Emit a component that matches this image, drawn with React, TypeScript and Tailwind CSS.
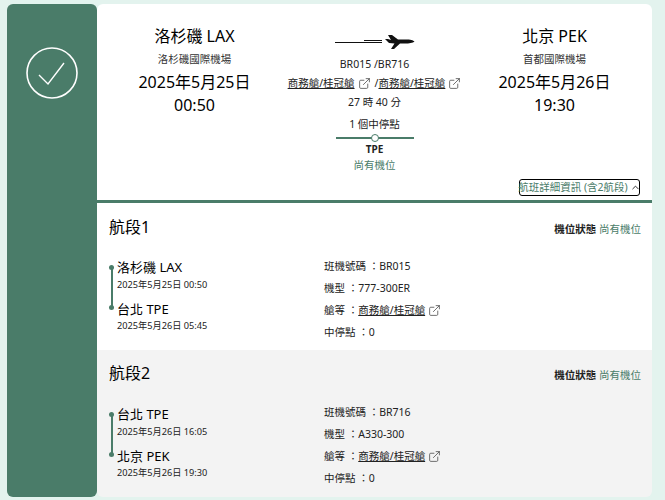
import { ChevronUp, ExternalLink } from 'lucide-react';

const LinkIcon = () => <ExternalLink className="w-[13px] h-[13px] ml-[3px] text-[#444] shrink-0" strokeWidth={1.4} />;

const segments = [
    {
        title: '航段1',
        bg: 'bg-white',
        headPad: 'pt-[12px]',
        routePad: 'mt-0',
        from: '洛杉磯 LAX',
        fromTime: '2025年5月25日 00:50',
        to: '台北 TPE',
        toTime: '2025年5月26日 05:45',
        flight: 'BR015',
        model: '777-300ER'
    },
    {
        title: '航段2',
        bg: 'bg-[#f3f3f3]',
        headPad: 'pt-[11px]',
        routePad: 'mt-[1px]',
        from: '台北 TPE',
        fromTime: '2025年5月26日 16:05',
        to: '北京 PEK',
        toTime: '2025年5月26日 19:30',
        flight: 'BR716',
        model: 'A330-300'
    }
];

const Place = ({ city, airport, date, time }: { city: string; airport: string; date: string; time: string }) => (
    <div className="flex flex-col items-center text-black">
        <div className="text-[16px] leading-[22px] mt-[21px]">{city}</div>
        <div className="text-[10.5px] leading-[16px] mt-[4px] text-[#333]">{airport}</div>
        <div className="text-[16px] leading-[22px] mt-[4px]">{date}</div>
        <div className="text-[16px] leading-[22px] mt-[1px]">{time}</div>
    </div>
);

const Segment = ({ seg }: { seg: (typeof segments)[number] }) => (
    <div className={`h-[147px] pl-[12px] pr-[11px] ${seg.bg}`}>
        <div className={`flex justify-between items-center ${seg.headPad}`}>
            <div className="text-[16px] leading-[24px] text-black">{seg.title}</div>
            <div className="text-[10.5px] leading-[16px] mt-[3px]">
                <span className="font-bold text-[#222]">機位狀態</span> <span className="text-[#4a7c69]">尚有機位</span>
            </div>
        </div>
        <div className="flex mt-[16px]">
            <div className={`w-[215px] flex ${seg.routePad}`}>
                <div className="relative w-[5px] mr-[3px] mt-[12px] h-[41px] flex justify-center">
                    <div className="w-[2px] h-full bg-[#4a7c69]" />
                    <div className="absolute top-[-2px] w-[5px] h-[5px] rounded-full bg-[#4a7c69]" />
                    <div className="absolute bottom-[-2px] w-[5px] h-[5px] rounded-full bg-[#4a7c69]" />
                </div>
                <div className="text-black">
                    <div className="text-[13px] leading-[18px] mt-[3px]">{seg.from}</div>
                    <div className="text-[9.2px] leading-[14px] mt-[2px] text-[#222]">{seg.fromTime}</div>
                    <div className="text-[13px] leading-[18px] mt-[8px]">{seg.to}</div>
                    <div className="text-[9.2px] leading-[14px] mt-[1px] text-[#222]">{seg.toTime}</div>
                </div>
            </div>
            <div className="text-[10.5px] leading-[22px] text-[#222]">
                <div>班機號碼 ：{seg.flight}</div>
                <div>機型 ：{seg.model}</div>
                <div className="flex items-center">
                    艙等 ：<span className="underline">商務艙/桂冠艙</span>
                    <LinkIcon />
                </div>
                <div>中停點 ：0</div>
            </div>
        </div>
    </div>
);

export default function App() {
    return (
        <div className="w-[665px] h-[500px] bg-[#e3f3ee] pt-[4px] pl-[7px] overflow-hidden">
            <div className="w-[645px] h-[493px] flex font-['Noto_Sans','Noto_Sans_CJK_TC',sans-serif]">
                <div className="w-[90px] h-full bg-[#4a7c69] rounded-[6px] pt-[43px] pl-[19px] shrink-0">
                    <svg width="52" height="52" viewBox="0 0 52 52" fill="none" stroke="white">
                        <circle cx="26" cy="26" r="25" strokeWidth="1.6" />
                        <path d="M13 28 L22 37 L38 16" strokeWidth="1.4" />
                    </svg>
                </div>
                <div className="w-[555px] h-full rounded-[6px] overflow-hidden">
                    <div className="relative h-[199px] bg-white border-b-[3px] border-[#4a7c69] grid grid-cols-[195px_165px_195px]">
                        <Place city="洛杉磯 LAX" airport="洛杉磯國際機場" date="2025年5月25日" time="00:50" />
                        <div className="flex flex-col items-center text-[#222] text-[10.5px] whitespace-nowrap">
                            <svg width="80" height="18" viewBox="0 0 80 18" className="mt-[29px] shrink-0">
                                <rect x="0" y="9" width="47" height="1" fill="#111" />
                                <rect x="29" y="7" width="18" height="1" fill="#111" />
                                <path
                                    d="M53 2 L57 2 L63 6.5 L72 6.5 C77 6.5 79 8 79.5 8.5 C78 10 74 10.5 70 10.5 L65 10.5 L59 16 L56 16 L59.5 10.5 L54 10 L50 6 L53 6 L56 7 Z"
                                    fill="#111"
                                />
                            </svg>
                            <div className="leading-[16px] mt-[5px]">BR015 /BR716</div>
                            <div className="flex items-center leading-[16px] mt-[3px]">
                                <span className="underline">商務艙/桂冠艙</span>
                                <LinkIcon />
                                <span className="ml-[4px]">/</span>
                                <span className="underline">商務艙/桂冠艙</span>
                                <LinkIcon />
                            </div>
                            <div className="leading-[16px] mt-[3px]">27 時 40 分</div>
                            <div className="leading-[16px] mt-[6px]">1 個中停點</div>
                            <div className="relative w-[78px] h-[2px] bg-[#4a7c69] mt-[5px] shrink-0">
                                <div className="absolute left-[35px] top-[-3px] w-[8px] h-[8px] rounded-full bg-white border border-[#4a7c69]" />
                            </div>
                            <div className="text-[10px] font-bold leading-[14px] mt-[3px] text-[#222]">TPE</div>
                            <div className="leading-[16px] mt-[1px] text-[#4a7c69]">尚有機位</div>
                        </div>
                        <Place city="北京 PEK" airport="首都國際機場" date="2025年5月26日" time="19:30" />
                        <div className="absolute right-[12px] bottom-[4px] h-[17px] w-[121px] flex items-center justify-center border-[1.5px] border-black rounded-[3px] text-[10.5px] leading-none text-[#4a7c69] whitespace-nowrap">
                            航班詳細資訊 (含2航段)
                            <ChevronUp className="w-[11px] h-[11px] ml-[2px] text-[#222] shrink-0" />
                        </div>
                    </div>
                    {segments.map((seg) => (
                        <Segment key={seg.title} seg={seg} />
                    ))}
                </div>
            </div>
        </div>
    );
}
